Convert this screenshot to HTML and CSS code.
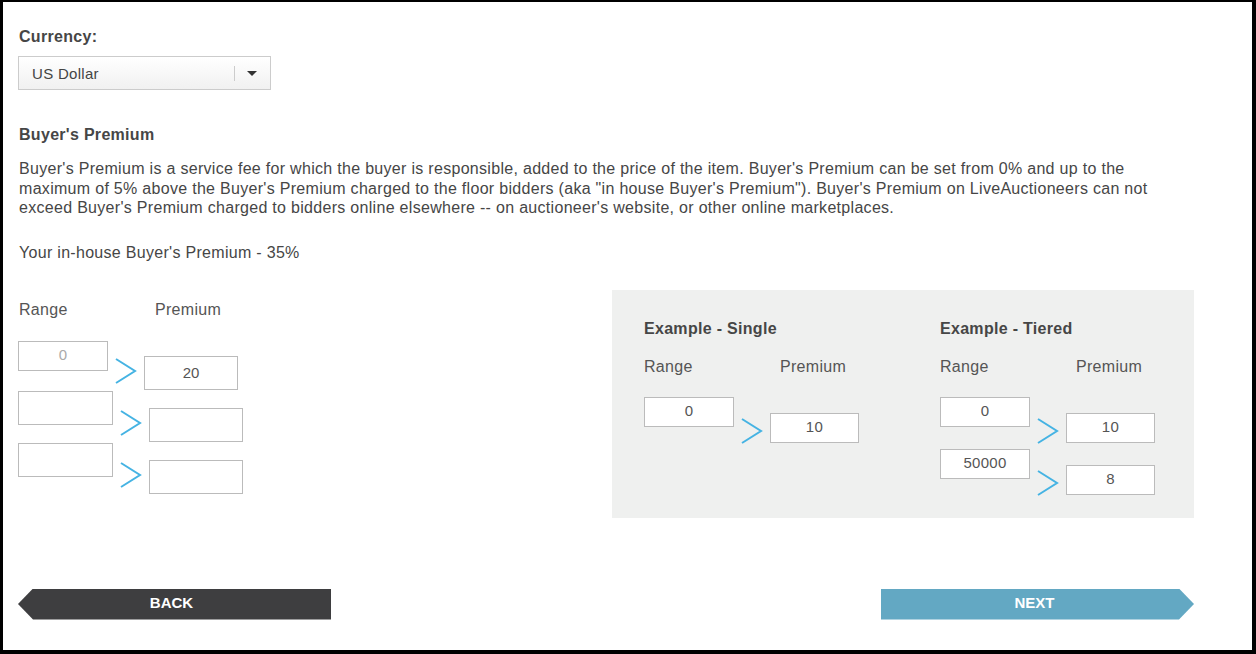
FILE: index.html
```html
<html>
  <head>
    <meta charset="UTF-8">
    <title>Buyer's Premium</title>
    <link rel="stylesheet" href="styles.css">
  </head>
  <body>
    <div class="frame">
      <div class="content">
        <label class="field-label">Currency:</label>
        <div class="select">
          <span class="select-value">US Dollar</span>
          <span class="select-divider"></span>
          <span class="select-caret"></span>
        </div>

        <h3 class="section-title">Buyer's Premium</h3>
        <p class="description">Buyer's Premium is a service fee for which the buyer is responsible, added to the price of the item. Buyer's Premium can be set from 0% and up to the maximum of 5% above the Buyer's Premium charged to the floor bidders (aka "in house Buyer's Premium"). Buyer's Premium on LiveAuctioneers can not exceed Buyer's Premium charged to bidders online elsewhere -- on auctioneer's website, or other online marketplaces.</p>
        <p class="in-house">Your in-house Buyer's Premium - 35%</p>

        <div class="premium-section">
          <!-- Editable tiers -->
          <div class="tiers">
            <div class="col-labels">
              <span class="col-range">Range</span>
              <span>Premium</span>
            </div>
            <div class="tier-row first">
              <input class="range-input disabled" type="text" value="0" readonly>
              <svg class="arrow" viewBox="0 0 22 26"><polyline points="1,1 20,13 1,25"/></svg>
              <input class="premium-input" type="text" value="20">
            </div>
            <div class="tier-row">
              <input class="range-input" type="text" value="">
              <svg class="arrow" viewBox="0 0 22 26"><polyline points="1,1 20,13 1,25"/></svg>
              <input class="premium-input" type="text" value="">
            </div>
            <div class="tier-row">
              <input class="range-input" type="text" value="">
              <svg class="arrow" viewBox="0 0 22 26"><polyline points="1,1 20,13 1,25"/></svg>
              <input class="premium-input" type="text" value="">
            </div>
          </div>

          <!-- Examples -->
          <div class="examples">
            <div class="example">
              <h4 class="example-title">Example - Single</h4>
              <div class="col-labels">
                <span class="col-range">Range</span>
                <span>Premium</span>
              </div>
              <div class="example-row">
                <div class="box range-box">0</div>
                <svg class="arrow" viewBox="0 0 22 26"><polyline points="1,1 20,13 1,25"/></svg>
                <div class="box premium-box">10</div>
              </div>
            </div>
            <div class="example">
              <h4 class="example-title">Example - Tiered</h4>
              <div class="col-labels">
                <span class="col-range">Range</span>
                <span>Premium</span>
              </div>
              <div class="example-row">
                <div class="box range-box">0</div>
                <svg class="arrow" viewBox="0 0 22 26"><polyline points="1,1 20,13 1,25"/></svg>
                <div class="box premium-box">10</div>
              </div>
              <div class="example-row">
                <div class="box range-box">50000</div>
                <svg class="arrow" viewBox="0 0 22 26"><polyline points="1,1 20,13 1,25"/></svg>
                <div class="box premium-box">8</div>
              </div>
            </div>
          </div>
        </div>

        <div class="nav-buttons">
          <button class="btn btn-back">BACK</button>
          <button class="btn btn-next">NEXT</button>
        </div>
      </div>
    </div>
  </body>
</html>
```

FILE: styles.css
```css
body {
  margin: 0;
  font-family: "Liberation Sans", Arial, sans-serif;
  color: #464646;
  background: #fff;
  letter-spacing: 0.3px;
}
.frame {
  box-sizing: border-box;
  height: 654px;
  border-style: solid;
  border-color: #000;
  border-width: 2px 4px 4px 3px;
}
.content {
  width: 1176px;
  padding: 25px 0 0 15px;
}
.field-label {
  display: block;
  font-size: 16px;
  font-weight: bold;
  line-height: 20px;
  padding-left: 1px;
}
.select {
  box-sizing: border-box;
  width: 253px;
  height: 34px;
  margin-top: 9px;
  border: 1px solid #ccc;
  background: linear-gradient(#fff, #f1f1f1);
  display: flex;
  align-items: center;
}
.select-value {
  flex: 1;
  font-size: 15px;
  padding-left: 13px;
  color: #444;
}
.select-divider {
  width: 1px;
  height: 15px;
  background: #ccc;
  margin-right: 12px;
}
.select-caret {
  width: 0;
  height: 0;
  border-left: 5px solid transparent;
  border-right: 5px solid transparent;
  border-top: 5px solid #333;
  margin-right: 13px;
}
.section-title {
  font-size: 16px;
  font-weight: bold;
  line-height: 20px;
  margin: 35px 0 0 1px;
}
.description {
  font-size: 16px;
  line-height: 19.5px;
  margin: 14px 0 0 1px;
  width: 1130px;
}
.in-house {
  font-size: 16px;
  line-height: 20px;
  margin: 25px 0 0 1px;
}
.premium-section {
  display: flex;
  margin-top: 27px;
}
.tiers {
  width: 594px;
  padding-top: 10px;
}
.col-labels {
  font-size: 16px;
  line-height: 20px;
  color: #555;
  padding-left: 1px;
  display: flex;
}
.col-range {
  width: 136px;
}
.tiers .col-labels {
  margin-bottom: 21px;
}
.tier-row {
  display: flex;
  align-items: flex-start;
  margin-bottom: 1px;
}
.range-input,
.premium-input,
.box {
  box-sizing: border-box;
  border: 1px solid #bbb;
  background: #fff;
  font-family: "Liberation Sans", Arial, sans-serif;
  font-size: 15px;
  color: #555;
  text-align: center;
  padding: 0;
  margin: 0;
  outline: none;
}
.range-input {
  width: 95px;
  height: 34px;
}
.range-input.disabled {
  color: #aaa;
  padding-bottom: 3px;
}
.premium-input {
  width: 94px;
  height: 34px;
  margin-top: 17px;
}
.arrow {
  width: 22px;
  height: 26px;
  margin: 19px 7px 0 7px;
  flex: none;
}
.tier-row.first .range-input {
  width: 90px;
  height: 30px;
}
.tier-row.first .premium-input {
  margin-top: 15px;
}
.tier-row.first .arrow {
  margin-top: 17px;
}
.arrow polyline {
  fill: none;
  stroke: #45b3e3;
  stroke-width: 2;
}
.examples {
  box-sizing: border-box;
  width: 582px;
  height: 228px;
  background: #eff0ef;
  padding: 29px 0 0 32px;
  display: flex;
}
.example {
  width: 296px;
  flex: none;
}
.example + .example {
  flex: 1;
  width: auto;
}
.example-title {
  font-size: 16px;
  font-weight: bold;
  line-height: 20px;
  margin: 0 0 18px;
  color: #464646;
}
.example .col-labels {
  margin-bottom: 20px;
  padding-left: 0;
}
.example-row {
  display: flex;
  align-items: flex-start;
  margin-bottom: 5px;
}
.box {
  height: 30px;
  line-height: 26px;
}
.range-box {
  width: 90px;
}
.premium-box {
  width: 89px;
  margin-top: 16px;
}
.example .arrow {
  margin-top: 21px;
}
.nav-buttons {
  display: flex;
  justify-content: space-between;
  margin-top: 71px;
}
.btn {
  width: 313px;
  height: 31px;
  border: none;
  color: #fff;
  font-family: "Liberation Sans", Arial, sans-serif;
  font-size: 15px;
  font-weight: bold;
  padding: 0 6px 3px 0;
  cursor: pointer;
}
.btn-back {
  background: #3e3e40;
  clip-path: polygon(15px 0, 100% 0, 100% 100%, 15px 100%, 0 50%);
}
.btn-next {
  background: #63a8c3;
  clip-path: polygon(0 0, calc(100% - 15px) 0, 100% 50%, calc(100% - 15px) 100%, 0 100%);
}
```
